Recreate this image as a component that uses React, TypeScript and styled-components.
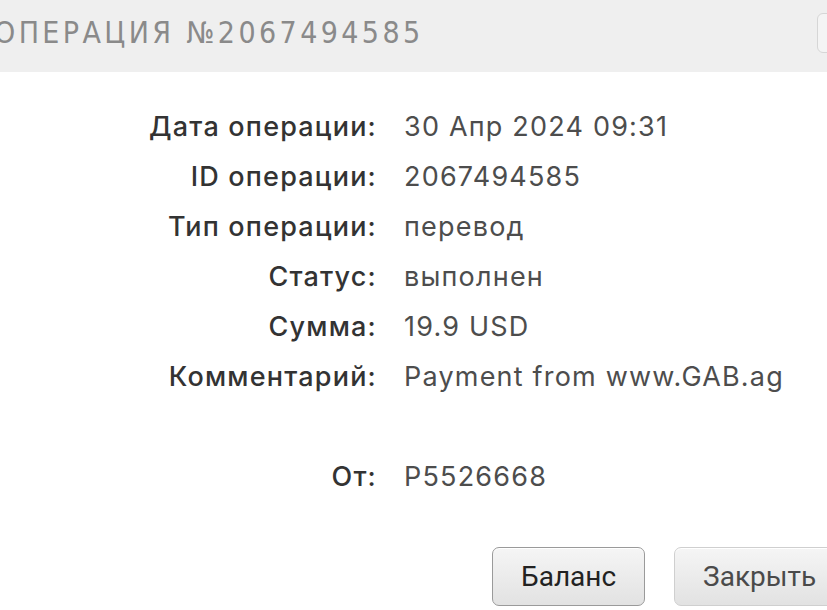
import styled, { createGlobalStyle } from 'styled-components';

const GlobalStyle = createGlobalStyle`
    html, body {
        margin: 0;
        padding: 0;
        background: #fff;
        overflow: hidden;
    }
    body {
        width: 827px;
        height: 610px;
    }
`;

const rows: [string, string][] = [
    ['Дата операции:', '30 Апр 2024 09:31'],
    ['ID операции:', '2067494585'],
    ['Тип операции:', 'перевод'],
    ['Статус:', 'выполнен'],
    ['Сумма:', '19.9 USD'],
    ['Комментарий:', 'Payment from www.GAB.ag'],
    ['', ''],
    ['От:', 'P5526668'],
];

const App = () => {
    return (
        <>
            <GlobalStyle />
            <Page>
                <Header>
                    <Title>ОПЕРАЦИЯ №2067494585</Title>
                    <CornerButton />
                </Header>
                <Details>
                    {rows.map(([label, value], i) => (
                        <Row key={i}>
                            <Label>{label}</Label>
                            <Value>{value}</Value>
                        </Row>
                    ))}
                </Details>
                <Actions>
                    <Button $primary>Баланс</Button>
                    <Button>Закрыть</Button>
                </Actions>
            </Page>
        </>
    );
};

const Page = styled.div`
    width: 827px;
    height: 610px;
    overflow: hidden;
    display: flex;
    flex-direction: column;
`;

const Header = styled.div`
    height: 72px;
    background: #efefef;
    display: flex;
    align-items: center;
    justify-content: space-between;
    flex-shrink: 0;
`;

const Title = styled.div`
    margin-left: -6px;
    margin-top: -7px;
    font-family: 'DejaVu Sans Condensed', 'Liberation Sans', sans-serif;
    font-size: 30px;
    letter-spacing: 3.4px;
    color: #8a8a8a;
    white-space: nowrap;
`;

const CornerButton = styled.div`
    width: 30px;
    height: 38px;
    margin-right: -22px;
    margin-top: -6px;
    border: 1px solid #d6d6d6;
    border-radius: 6px;
    background: #f4f4f4;
`;

const Details = styled.div`
    padding-top: 29px;
    display: flex;
    flex-direction: column;
`;

const Row = styled.div`
    display: grid;
    grid-template-columns: 376px 1fr;
    column-gap: 28px;
    height: 50px;
    align-items: center;
    font-family: Inter, 'Noto Sans', sans-serif;
    font-size: 27px;
    letter-spacing: 1.2px;
    white-space: nowrap;
`;

const Label = styled.div`
    text-align: right;
    font-weight: 500;
    color: #333;
    margin-right: -1px;
`;

const Value = styled.div`
    color: #4d4d4d;
`;

const Actions = styled.div`
    margin-top: 46px;
    display: flex;
    gap: 29px;
    padding-left: 492px;
`;

const Button = styled.button<{ $primary?: boolean }>`
    flex-shrink: 0;
    height: 59px;
    padding: 0 28px;
    border-radius: 7px;
    border: 1px solid ${(p) => (p.$primary ? '#9a9a9a' : '#cfcfcf')};
    background: linear-gradient(#f5f5f5, #e2e2e2);
    font-family: Roboto, 'Liberation Sans', sans-serif;
    font-size: 28px;
    color: ${(p) => (p.$primary ? '#222' : '#4a4a4a')};
    box-shadow: inset 0 1px 0 #fff;
    white-space: nowrap;
`;

export default App;
